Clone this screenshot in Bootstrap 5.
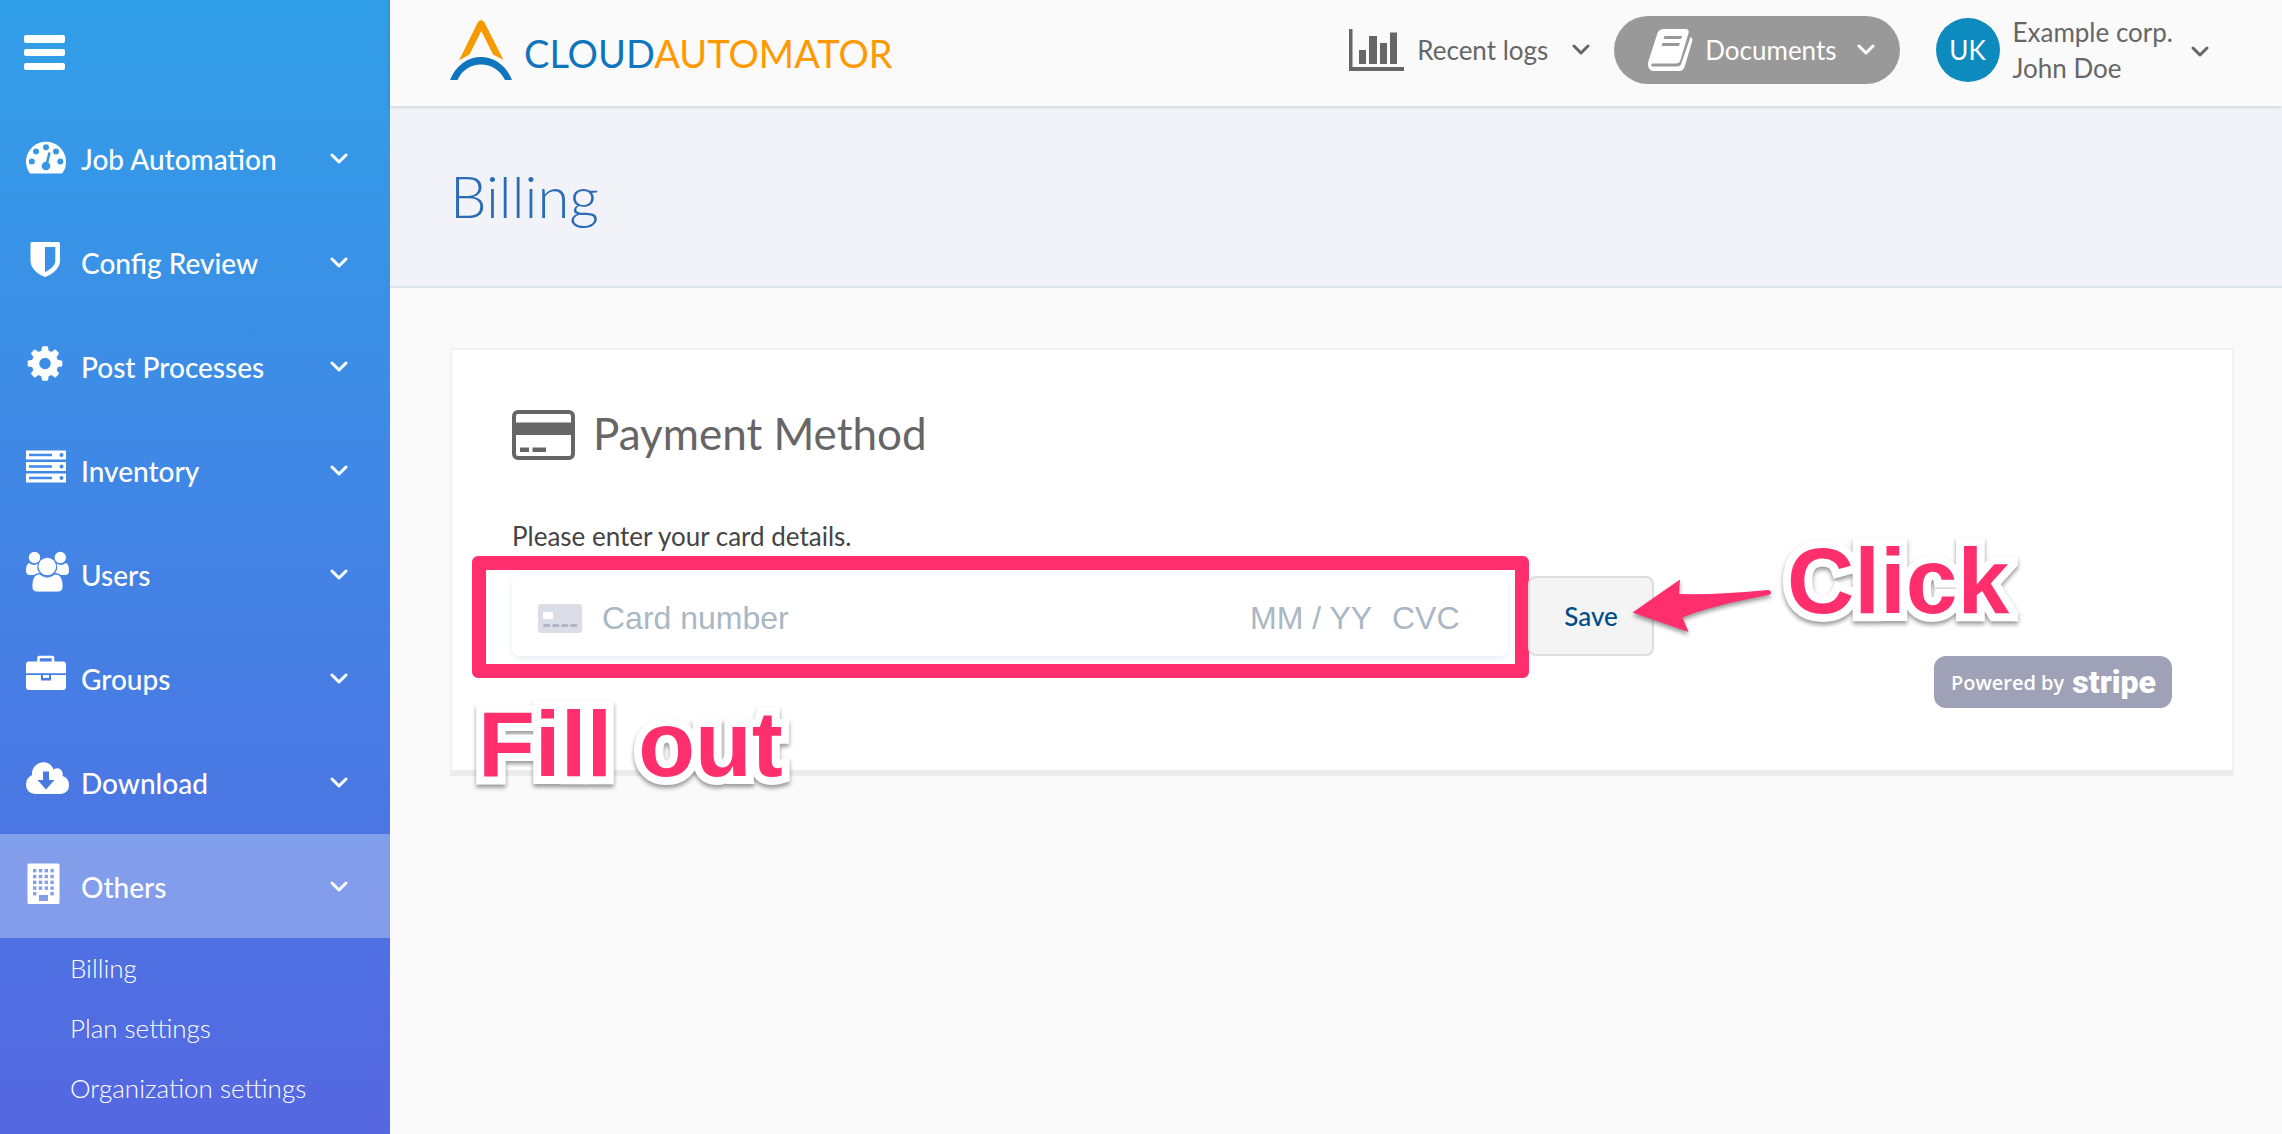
<!DOCTYPE html>
<html lang="en">
<head>
<meta charset="utf-8">
<meta name="viewport" content="width=device-width, initial-scale=1">
<title>Billing | Cloud Automator</title>
<link href="https://cdn.jsdelivr.net/npm/bootstrap@5.3.0/dist/css/bootstrap.min.css" rel="stylesheet">
<script src="https://cdn.jsdelivr.net/npm/bootstrap@5.3.0/dist/js/bootstrap.bundle.min.js" defer></script>
<style>
  body { font-family: Lato, "Noto Sans", sans-serif; font-size: 26px; line-height: 36px; color: #666; background: #fafafa; }
  svg { flex: none; display: block; }
  .chev { width: 18px; height: 12px; fill: none; stroke: currentColor; stroke-width: 3; stroke-linecap: round; stroke-linejoin: round; }

  .side { width: 390px; background: linear-gradient(#319fe8, #5567e1); }
  .side-toggle { padding: 32px 24px 33px; }
  .side-link { height: 104px; padding: 2px 42px 0 26px; gap: 11px; font-size: 28px; font-weight: 500; color: #fff; }
  .side-link svg.ico { width: 44px; height: 48px; margin-top: -2px; fill: #fff; }
  .side-link.current { background: rgba(255,255,255,.3); }
  .side-sub a { display: block; padding: 12px 0 12px 70px; font-weight: 300; color: #fff; }

  .topbar { height: 106px; padding: 0 73px 6px 60px; background: #fafafa; box-shadow: 0 1px 4px rgba(0,0,0,.16); z-index: 1; }
  .brand { gap: 12px; font-size: 38px; color: #f90; }
  .brand span { padding-top: 6px; }
  .brand b { font-weight: 400; color: #0f75bd; }
  .top-btn { border: 0; padding: 0; background: none; color: #666; }
  .top-btn.docs { height: 68px; padding: 0 25px 0 34px; border-radius: 34px; background: #999; color: #fff; }
  .avatar { width: 64px; height: 64px; background: #0d8bbf; color: #fff; }
  .who { margin: 0 18px 0 13px; }

  .title-band { height: 182px; padding: 0 60px; background: #f2f3f8; border-bottom: 2px solid #dae5ee; }
  .title-band h1 { font-size: 58px; line-height: 68px; font-weight: 300; color: #2b6cb5; }
  .page-body { padding: 60px 48px 60px 60px; }
  .panel { padding: 60px 60px 62px; background: #fff; border: 2px solid #f2f2f2; border-bottom: 6px solid #ececec; }
  .panel h2 { gap: 18px; margin-bottom: 56px; font-size: 44px; line-height: 50px; font-weight: 400; }
  .panel h2 span { margin-top: -4px; }
  .field-label { color: #444; line-height: 40px; margin-bottom: 20px; }
  .pay-row { gap: 20px; }
  .pay-field { width: 60%; height: 80px; padding: 4px 20px 0 26px; border-radius: 8px; background: #fff; box-shadow: 0 2px 6px #e6ebf1; }
  .pay-field input { height: 48px; padding: 0; border: 0; outline: 0; background: none; font: 32px "Liberation Sans", sans-serif; color: #32325d; min-width: 0; }
  .pay-field input::placeholder { color: #aab7c4; opacity: 1; }
  .in-date { width: 142px; }
  .in-cvc { width: 96px; }
  .save { width: 126px; height: 80px; border: 2px solid #ddd; border-radius: 8px; background: #f4f4f4; color: #004c87; font-size: 26px; font-weight: 500; }
  .stripe { height: 52px; padding: 0 16px 0 17px; gap: 8px; border-radius: 12px; background: #9fa1b7; color: #fff; font: 600 20px "Open Sans", sans-serif; }
  .stripe strong { font: 900 32px Roboto, sans-serif; }

  .note { position: absolute; pointer-events: none; color: #ff2f6d; }
  .note-box { inset: -20px -21px -22px -40px; border: 14px solid #ff2f6d; border-radius: 6px; }
  .note-text { font: bold 93px/110px "Liberation Sans", sans-serif; white-space: nowrap; -webkit-text-stroke: 16px #fff; paint-order: stroke fill; stroke-linejoin: round; filter: drop-shadow(0 3px 2px rgba(0,0,0,.4)); }
  .note-fill { left: -34px; top: 113px; }
  .note-click { left: 259px; top: -50px; }
  .note-arrow { left: 98px; top: -4px; filter: drop-shadow(0 3px 2px rgba(0,0,0,.4)); }
</style>
</head>
<body>
<div class="d-flex min-vh-100">
  <nav class="side flex-shrink-0" aria-label="Main">
    <button class="side-toggle btn border-0 d-block" type="button" aria-label="Menu">
      <svg width="42" height="41" viewBox="24 32 42 41" fill="#fff"><rect x="24" y="35" width="41" height="8" rx="2"/><rect x="24" y="49" width="41" height="7" rx="2"/><rect x="24" y="63" width="41" height="7" rx="2"/></svg>
    </button>
    <a class="side-link d-flex align-items-center text-decoration-none" href="#">
      <svg class="ico" viewBox="26 28 44 48"><path d="M29.5 67A20 20 0 1 1 62.500 67Q62 67.500 61 67.500H31Q30 67.500 29.500 67Z"/><g fill="#3796e6"><circle cx="46" cy="41.300" r="3"/><circle cx="36" cy="45.500" r="3"/><circle cx="56" cy="45.500" r="3"/><circle cx="31.800" cy="55.500" r="3"/><circle cx="60.300" cy="55.500" r="3"/><circle cx="46" cy="60" r="4.300"/></g><path d="M46.500 59L49.300 47.500" stroke="#3796e6" stroke-width="2.600" stroke-linecap="round"/></svg>
      <span class="flex-grow-1">Job Automation</span><svg class="chev" viewBox="0 0 18 12"><path d="M2 2l7 7 7-7"/></svg></a>
    <a class="side-link d-flex align-items-center text-decoration-none" href="#">
      <svg class="ico" viewBox="26 28 44 48"><path fill-rule="evenodd" d="M32 32H58.500Q60 32 60 33.500V51C60 59 51 65 45.200 67C39 65 30.500 59 30.500 51V33.500Q30.500 32 32 32ZM45 37V62C50 60 55.300 55.500 55.300 51V37Z"/></svg>
      <span class="flex-grow-1">Config Review</span><svg class="chev" viewBox="0 0 18 12"><path d="M2 2l7 7 7-7"/></svg></a>
    <a class="side-link d-flex align-items-center text-decoration-none" href="#">
      <svg class="ico" viewBox="26 28 44 48"><circle cx="45" cy="49.500" r="9.500" fill="none" stroke="#fff" stroke-width="7.500"/><g id="teeth"><path id="tooth" d="M41.200 38L42 33Q42.200 32.200 43 32.200H47Q47.800 32.200 48 33L48.800 38Z"/><use href="#tooth" transform="rotate(45 45 49.500)"/><use href="#tooth" transform="rotate(90 45 49.500)"/><use href="#tooth" transform="rotate(135 45 49.500)"/></g><use href="#teeth" transform="rotate(180 45 49.500)"/></svg>
      <span class="flex-grow-1">Post Processes</span><svg class="chev" viewBox="0 0 18 12"><path d="M2 2l7 7 7-7"/></svg></a>
    <a class="side-link d-flex align-items-center text-decoration-none" href="#">
      <svg class="ico" viewBox="26 28 44 48"><g id="unit"><rect x="26" y="32.500" width="40" height="9"/><path d="M29 37H52" stroke="#4189e7" stroke-width="2.500"/><circle cx="61.500" cy="37" r="2" fill="#4189e7"/></g><use href="#unit" y="11.500"/><use href="#unit" y="23"/></svg>
      <span class="flex-grow-1">Inventory</span><svg class="chev" viewBox="0 0 18 12"><path d="M2 2l7 7 7-7"/></svg></a>
    <a class="side-link d-flex align-items-center text-decoration-none" href="#">
      <svg class="ico" viewBox="26 28 44 48"><circle cx="34.500" cy="35.500" r="5.700"/><circle cx="60.300" cy="35.500" r="5.700"/><path d="M29 41Q34 44.500 38 41.500C36.500 46 37.500 49 40 51Q36 51 34 53H30Q26 53 26 49Q26 42 29 41ZM66 41Q61 44.500 56.600 41.500C58 46 57 49 55 51Q59 51 61 53H65Q69 53 69 49Q69 42 66 41Z"/><circle cx="47.300" cy="44.500" r="8.800"/><path d="M39.500 52Q47.500 58.500 55 52C61 52 63 58 63 64.500Q63 70 57 70H38Q32 70 32 64.500C32 58 34 52 39.500 52Z" stroke="#4482e6" stroke-width=".8"/></svg>
      <span class="flex-grow-1">Users</span><svg class="chev" viewBox="0 0 18 12"><path d="M2 2l7 7 7-7"/></svg></a>
    <a class="side-link d-flex align-items-center text-decoration-none" href="#">
      <svg class="ico" viewBox="26 28 44 48"><path d="M38.500 36V31.500Q38.500 31 39 31H52.500Q53 31 53 31.500V36" fill="none" stroke="#fff" stroke-width="2.600"/><path d="M29 35.500H63Q66 35.500 66 38.500V47.300H26V38.500Q26 35.500 29 35.500ZM26 49H41V54.500H51V49H66V61Q66 64 63 64H29Q26 64 26 61Z"/><rect x="43" y="49" width="6" height="3"/></svg>
      <span class="flex-grow-1">Groups</span><svg class="chev" viewBox="0 0 18 12"><path d="M2 2l7 7 7-7"/></svg></a>
    <a class="side-link d-flex align-items-center text-decoration-none" href="#">
      <svg class="ico" viewBox="26 28 44 48"><path fill-rule="evenodd" d="M35 64Q26 63 26 54.500Q26 48 32 45C31 32 49 27 53.500 39.500C58 36 64 40 62.500 46Q69 48 69 55Q69 63 61 64ZM43 41.500V50H37.500L46 59.500L54.500 50H49V41.500Z"/></svg>
      <span class="flex-grow-1">Download</span><svg class="chev" viewBox="0 0 18 12"><path d="M2 2l7 7 7-7"/></svg></a>
    <a class="side-link current d-flex align-items-center text-decoration-none" href="#" aria-expanded="true">
      <svg class="ico" viewBox="26 28 44 48"><rect x="27.500" y="29.500" width="32" height="40.500" rx="1.500"/><g fill="#839eeb"><g id="wins"><rect x="33" y="35" width="3.400" height="3.400"/><rect x="38.800" y="35" width="3.400" height="3.400"/><rect x="44.600" y="35" width="3.400" height="3.400"/><rect x="50.400" y="35" width="3.400" height="3.400"/></g><use href="#wins" y="5.800"/><use href="#wins" y="11.600"/><use href="#wins" y="17.400"/><rect x="33" y="58" width="3.400" height="3.400"/><rect x="50.400" y="58" width="3.400" height="3.400"/><rect x="39" y="61" width="9" height="6"/></g></svg>
      <span class="flex-grow-1">Others</span><svg class="chev" viewBox="0 0 18 12"><path d="M2 2l7 7 7-7"/></svg></a>
    <div class="side-sub">
      <a class="text-decoration-none" href="#">Billing</a>
      <a class="text-decoration-none" href="#">Plan settings</a>
      <a class="text-decoration-none" href="#">Organization settings</a>
    </div>
  </nav>

  <div class="flex-grow-1 d-flex flex-column">
    <header class="topbar d-flex align-items-center position-relative">
      <a class="brand d-flex align-items-center text-decoration-none me-auto" href="#">
        <svg width="62" height="60" viewBox="451 20 62 60"><path d="M460 60.500L478.700 22.500Q480 20 482 20Q484 20 485.500 22.500L504.500 60L494 54.500L482.300 31L470.500 54.500Z" fill="#f59a00"/><path d="M451 80C457 65 469 57 482 57C495 57 507 65 513 80H506C501 70 492 64.500 482 64.500C472 64.500 463 70 458.500 80Z" fill="#0f75bd"/></svg>
        <span><b>CLOUD</b>AUTOMATOR</span>
      </a>
      <button class="top-btn d-flex align-items-center" type="button">
        <svg width="56" height="42" viewBox="1349 30 56 42" fill="#666"><path d="M1349 30H1352.500V68H1404V72H1349Z"/><rect x="1359" y="51" width="7" height="14"/><rect x="1369" y="37" width="8" height="28"/><rect x="1380" y="44" width="7" height="21"/><rect x="1390" y="33.500" width="7" height="31.500"/></svg>
        <span class="ms-2 ps-1 me-4">Recent logs</span><svg class="chev" viewBox="0 0 18 12"><path d="M2 2l7 7 7-7"/></svg>
      </button>
      <button class="top-btn docs d-flex align-items-center mx-4" type="button">
        <svg width="45" height="42" viewBox="1648 30 45 42" fill="#fff"><path fill-rule="evenodd" d="M1663 30H1686Q1689.500 30.500 1688.500 34L1680.500 61Q1679.500 64.500 1676 64.500H1652Q1650.500 65.500 1652 67.500H1677Q1680.500 67.500 1681.500 64L1690.500 38Q1693 39 1692.300 42L1684.500 68Q1683 72 1679 72H1654C1649 72 1647 67 1648.500 62L1657.500 34Q1659 30.500 1663 30ZM1664.500 37L1663.500 40H1681L1682 37ZM1662.500 44L1661.500 47H1679L1680 44Z"/></svg>
        <span class="ms-2 ps-1 me-3 pe-1">Documents</span><svg class="chev" viewBox="0 0 18 12"><path d="M2 2l7 7 7-7"/></svg>
      </button>
      <button class="top-btn d-flex align-items-center ms-2 ps-1 text-start" type="button">
        <span class="avatar rounded-circle d-flex align-items-center justify-content-center">UK</span>
        <span class="who">Example corp.<br>John Doe</span><svg class="chev mt-1" viewBox="0 0 18 12"><path d="M2 2l7 7 7-7"/></svg>
      </button>
    </header>

    <div class="title-band d-flex align-items-center"><h1 class="m-0">Billing</h1></div>

    <main class="page-body">
      <section class="panel">
        <h2 class="d-flex align-items-center">
          <svg width="63" height="50" viewBox="0 0 63 50"><rect x="2" y="2" width="59" height="46" rx="4" fill="none" stroke="#666" stroke-width="4"/><path d="M2 12.500H61V25H2ZM8 37.500H17V42H8ZM20.500 37.500H34V42H20.500Z" fill="#666"/></svg>
          <span>Payment Method</span>
        </h2>
        <form>
          <label class="field-label d-block" for="card-number">Please enter your card details.</label>
          <div class="pay-row d-flex">
            <div class="pay-field position-relative d-flex align-items-center">
              <svg width="44" height="29" viewBox="0 0 44 29"><rect width="44" height="29" rx="3" fill="#dcdee7"/><rect x="5" y="8" width="10" height="7" rx="1" fill="#fff"/><path d="M6.500 21.500H11M15.500 21.500H20M24.500 21.500H29M33.500 21.500H38" stroke="#b1b5c6" stroke-width="3" stroke-linecap="round"/></svg>
              <input class="flex-grow-1 ms-3 ps-1" id="card-number" type="text" placeholder="Card number">
              <input class="in-date" type="text" placeholder="MM / YY" aria-label="Expiry date">
              <input class="in-cvc" type="text" placeholder="CVC" aria-label="CVC">
              <div class="note note-box"></div>
              <div class="note note-text note-fill">Fill out</div>
            </div>
            <div class="position-relative">
              <button class="save" type="button">Save</button>
              <svg class="note note-arrow" width="150" height="70" viewBox="1626 572 150 70"><path d="M1632.500 612.500L1680 579.500L1679 594Q1720 595 1768 590Q1771 590 1771 593Q1770 595 1766 595.500Q1710 606 1682.500 617.500L1688.500 632Z" fill="#ff2f6d"/></svg>
              <div class="note note-text note-click">Click</div>
            </div>
          </div>
        </form>
        <div class="d-flex justify-content-end">
          <a class="stripe d-flex align-items-center text-decoration-none" href="#"><span>Powered by</span><strong>stripe</strong></a>
        </div>
      </section>
    </main>
  </div>
</div>
</body>
</html>
